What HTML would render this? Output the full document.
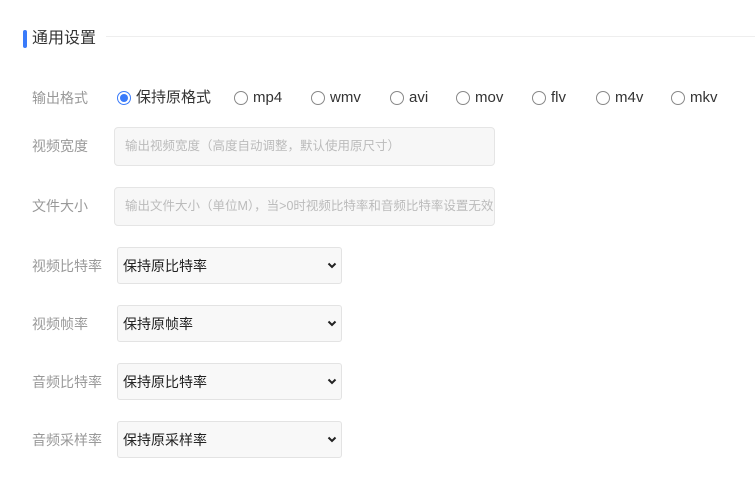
<!DOCTYPE html>
<html><head><meta charset="utf-8"><style>
body{margin:0;width:755px;height:478px;background:#fff;font-family:"Liberation Sans","Noto Sans CJK SC",sans-serif;position:relative;overflow:hidden}
.a{position:absolute}
.bar{left:23px;top:30px;width:4px;height:18px;background:#3a7bfa;border-radius:2px}
.title{left:32px;top:28px;font-size:16px;color:#333;line-height:22px}
.line{left:106px;top:36px;right:0;height:1px;background:#eee}
.lab{left:32px;font-size:14px;color:#999;line-height:20px}
.r{width:12px;height:12px;border:1px solid #888;border-radius:50%;top:91px}
.r.on{border-color:#3a7bfa}
.r.on:after{content:"";position:absolute;left:2px;top:2px;width:8px;height:8px;border-radius:50%;background:#3a7bfa}
.rt{top:88px;font-size:15px;color:#333;line-height:20px}
.inp{left:114px;width:381px;height:39px;border:1px solid #e5e5e5;background:#f7f7f7;border-radius:4px;font-size:12.5px;color:#bbb;line-height:37px;padding-left:10px;box-sizing:border-box;white-space:nowrap;overflow:hidden}
.sel{left:117px;width:225px;height:37px;border:1px solid #e3e3e3;background:#f8f8f8;border-radius:3px;box-sizing:border-box;font-size:14px;color:#222;line-height:36px;padding-left:5px}
.sel svg{position:absolute;right:4px;top:14px}
</style></head><body>
<div class="a bar"></div><div class="a title">通用设置</div><div class="a line"></div>
<div class="a lab" style="top:88px">输出格式</div>
<div class="a r on" style="left:117px"></div><div class="a rt" style="left:136px">保持原格式</div>
<div class="a r" style="left:234px"></div><div class="a rt" style="left:253px">mp4</div>
<div class="a r" style="left:311px"></div><div class="a rt" style="left:330px">wmv</div>
<div class="a r" style="left:390px"></div><div class="a rt" style="left:409px">avi</div>
<div class="a r" style="left:456px"></div><div class="a rt" style="left:475px">mov</div>
<div class="a r" style="left:532px"></div><div class="a rt" style="left:551px">flv</div>
<div class="a r" style="left:596px"></div><div class="a rt" style="left:615px">m4v</div>
<div class="a r" style="left:671px"></div><div class="a rt" style="left:690px">mkv</div>
<div class="a lab" style="top:136px">视频宽度</div>
<div class="a inp" style="top:127px">输出视频宽度（高度自动调整，默认使用原尺寸）</div>
<div class="a lab" style="top:196px">文件大小</div>
<div class="a inp" style="top:187px">输出文件大小（单位M），当&gt;0时视频比特率和音频比特率设置无效</div>
<div class="a lab" style="top:256px">视频比特率</div>
<div class="a sel" style="top:247px">保持原比特率<svg width="10" height="7" viewBox="0 0 10 7"><path d="M1.5 1.5L5 5L8.5 1.5" stroke="#222" stroke-width="2" fill="none"/></svg></div>
<div class="a lab" style="top:314px">视频帧率</div>
<div class="a sel" style="top:305px">保持原帧率<svg width="10" height="7" viewBox="0 0 10 7"><path d="M1.5 1.5L5 5L8.5 1.5" stroke="#222" stroke-width="2" fill="none"/></svg></div>
<div class="a lab" style="top:372px">音频比特率</div>
<div class="a sel" style="top:363px">保持原比特率<svg width="10" height="7" viewBox="0 0 10 7"><path d="M1.5 1.5L5 5L8.5 1.5" stroke="#222" stroke-width="2" fill="none"/></svg></div>
<div class="a lab" style="top:430px">音频采样率</div>
<div class="a sel" style="top:421px">保持原采样率<svg width="10" height="7" viewBox="0 0 10 7"><path d="M1.5 1.5L5 5L8.5 1.5" stroke="#222" stroke-width="2" fill="none"/></svg></div>
</body></html>
